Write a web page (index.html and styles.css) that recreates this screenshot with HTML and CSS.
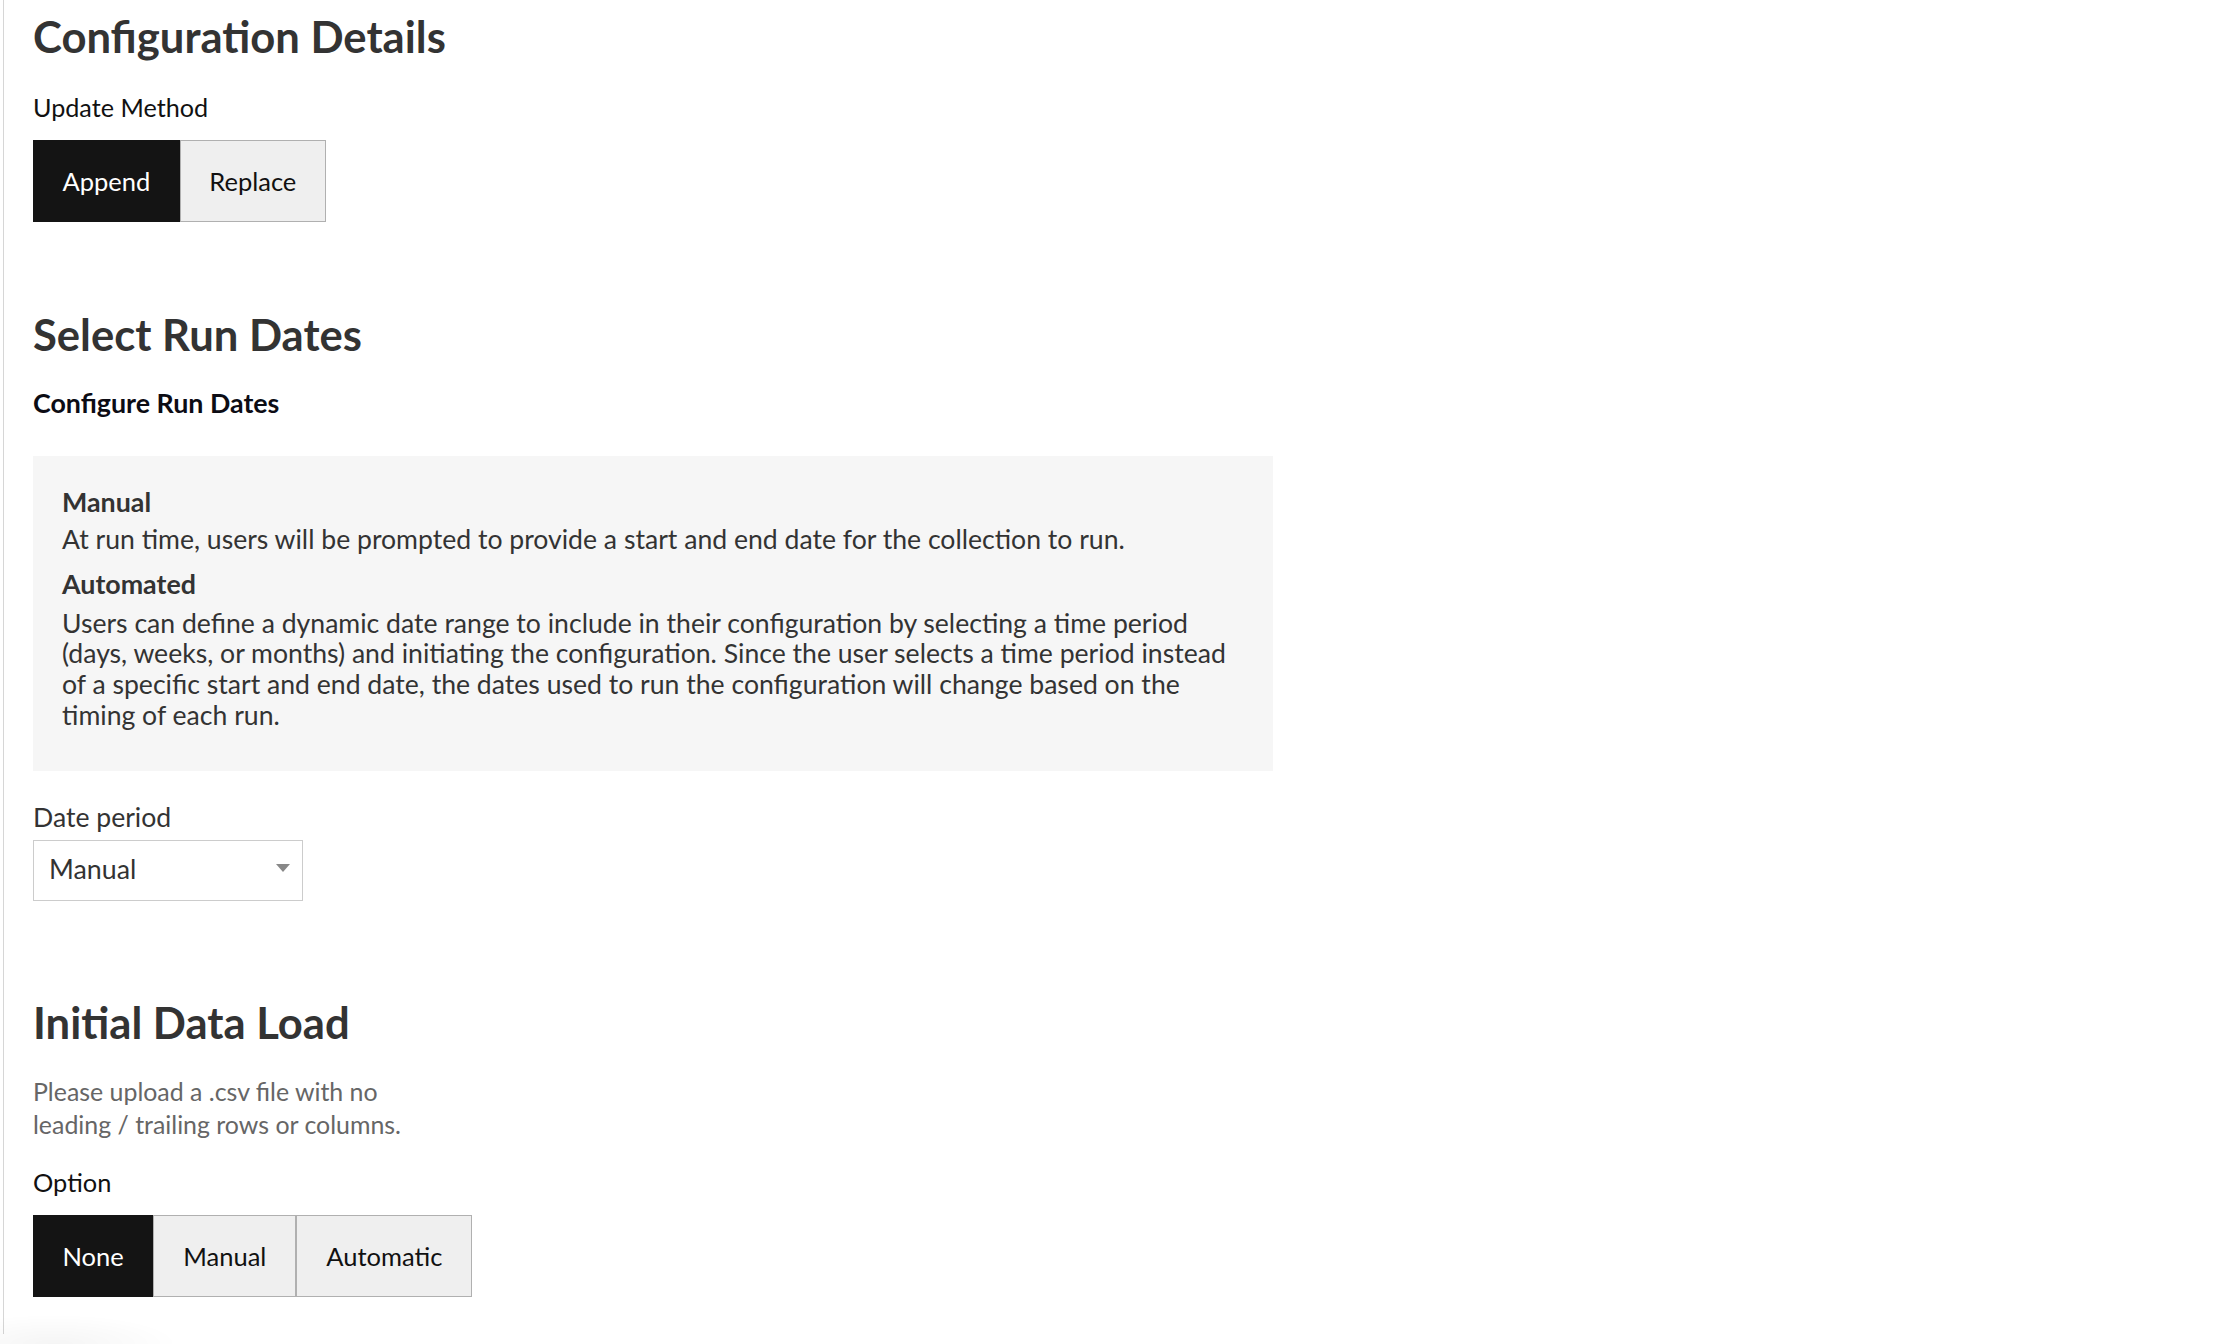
FILE: index.html
```html
<!DOCTYPE html>
<html lang="en">
<head>
<meta charset="utf-8">
<title>Configuration Details</title>
<link rel="stylesheet" href="styles.css">
</head>
<body>
<main class="page">
  <section class="section section-config">
    <h2 class="heading">Configuration Details</h2>
    <div class="field-label">Update Method</div>
    <div class="btn-group">
      <button class="seg seg-active">Append</button>
      <button class="seg">Replace</button>
    </div>
  </section>

  <section class="section section-dates">
    <h2 class="heading">Select Run Dates</h2>
    <div class="subheading">Configure Run Dates</div>
    <div class="info-box">
      <div class="info-title">Manual</div>
      <p class="info-text">At run time, users will be prompted to provide a start and end date for the collection to run.</p>
      <div class="info-title">Automated</div>
      <p class="info-text info-last">Users can define a dynamic date range to include in their configuration by selecting a time period (days, weeks, or months) and initiating the configuration. Since the user selects a time period instead of a specific start and end date, the dates used to run the configuration will change based on the timing of each run.</p>
    </div>
    <div class="select-label">Date period</div>
    <div class="select">
      <span class="select-value">Manual</span>
      <svg class="select-arrow" width="14" height="8" viewBox="0 0 14 8"><path d="M0 0 L14 0 L7 8 Z" fill="#888"/></svg>
    </div>
  </section>

  <section class="section section-load">
    <h2 class="heading">Initial Data Load</h2>
    <p class="hint">Please upload a .csv file with no leading / trailing rows or columns.</p>
    <div class="field-label field-label-option">Option</div>
    <div class="btn-group">
      <button class="seg seg-active">None</button>
      <button class="seg seg-wide">Manual</button>
      <button class="seg seg-wide">Automatic</button>
    </div>
  </section>
</main>
<div class="corner-fade"></div>
</body>
</html>
```

FILE: styles.css
```css
html, body {
  margin: 0;
  padding: 0;
  background: #ffffff;
}

body {
  font-family: Lato, "Open Sans", "Liberation Sans", sans-serif;
  color: #333333;
  min-height: 1344px;
}

.page {
  margin-left: 3px;
  border-left: 1px solid #d6d6d6;
  padding: 10px 0 0 29px;
  min-height: 1334px;
  box-sizing: border-box;
}

.section {
  display: flex;
  flex-direction: column;
  align-items: flex-start;
}

.heading {
  margin: 0;
  font-size: 43.6px;
  line-height: 52px;
  font-weight: 700;
  color: #333333;
}

.field-label {
  margin-top: 30px;
  font-size: 25.2px;
  line-height: 30px;
  color: #111111;
}

.btn-group {
  display: flex;
  margin-top: 18px;
}

.seg {
  font-family: inherit;
  font-size: 25.5px;
  height: 82px;
  padding: 0 28.5px;
  margin: 0;
  border: 1px solid #b0b0b0;
  background: #efefef;
  color: #111111;
  border-radius: 0;
}

.seg-wide {
  padding: 0 29px;
}

.seg-active {
  background: #141414;
  border-color: #141414;
  color: #ffffff;
}

.section-dates {
  margin-top: 86px;
}

.subheading {
  margin-top: 28px;
  font-size: 26.8px;
  line-height: 30px;
  font-weight: 700;
  color: #0c0c14;
}

.info-box {
  margin-top: 38px;
  width: 1240px;
  box-sizing: border-box;
  background: #f6f6f6;
  padding: 31px 29px 41px 29px;
}

.info-title {
  font-size: 26.8px;
  line-height: 30.6px;
  font-weight: 700;
  color: #333333;
}

.info-text {
  margin: 6px 0 15px 0;
  font-size: 26.6px;
  line-height: 30.6px;
  color: #333333;
}

.info-last {
  margin-bottom: 0;
  margin-top: 8px;
}

.select-label {
  margin-top: 31px;
  font-size: 26.6px;
  line-height: 30px;
  color: #333333;
}

.select {
  margin-top: 8px;
  width: 270px;
  height: 61px;
  box-sizing: border-box;
  border: 1px solid #cccccc;
  display: flex;
  align-items: center;
  justify-content: space-between;
  padding: 0 12px 4px 15px;
  background: #ffffff;
}

.select-value {
  font-size: 26.8px;
  color: #333333;
}

.select-arrow {
  display: block;
  margin-top: -2px;
}

.section-load {
  margin-top: 95px;
}

.hint {
  margin: 27px 0 0 0;
  max-width: 390px;
  font-size: 24.9px;
  line-height: 32.5px;
  color: #666666;
}

.field-label-option {
  margin-top: 27px;
  font-size: 25.4px;
}

.corner-fade {
  position: fixed;
  left: 0;
  bottom: 0;
  width: 180px;
  height: 30px;
  background: radial-gradient(ellipse at 30% 100%, rgba(0,0,0,0.04), rgba(0,0,0,0) 70%);
  pointer-events: none;
}
```
